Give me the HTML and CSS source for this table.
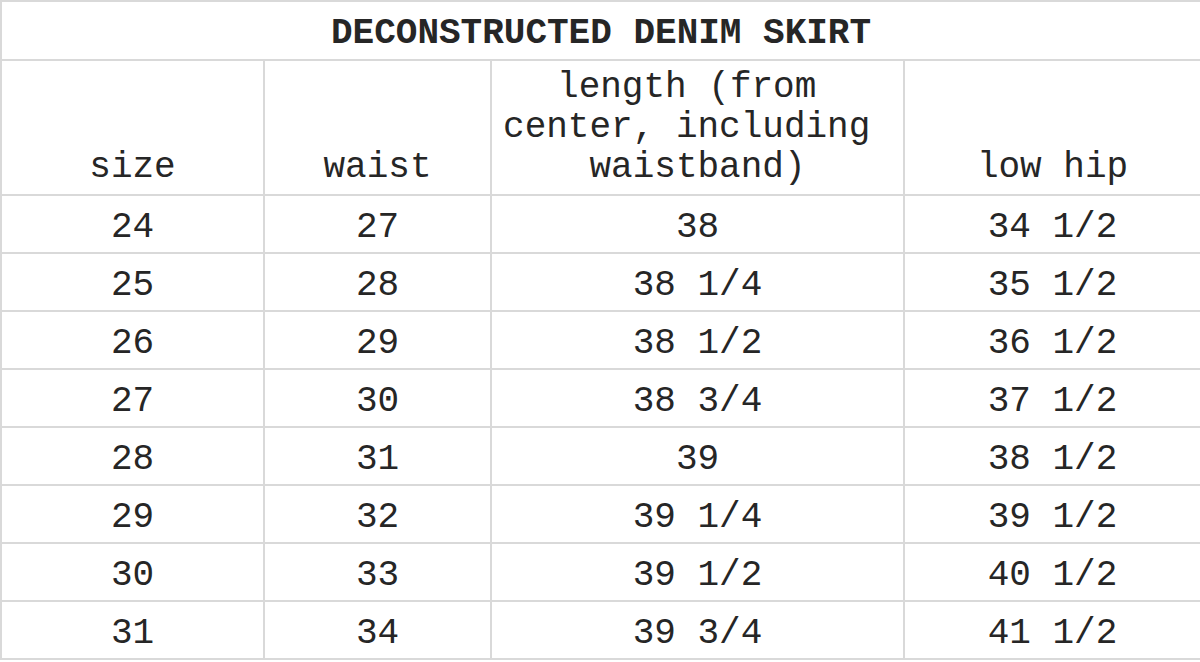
FILE: index.html
```html
<!DOCTYPE html>
<html>
<head>
<meta charset="utf-8">
<link rel="stylesheet" href="styles.css">
</head>
<body>
<table class="size-chart">
  <colgroup>
    <col class="c-size">
    <col class="c-waist">
    <col class="c-length">
    <col class="c-hip">
  </colgroup>
  <thead>
    <tr class="title-row"><th colspan="4">DECONSTRUCTED DENIM SKIRT</th></tr>
    <tr class="head-row">
      <th>size</th>
      <th>waist</th>
      <th>length (from&nbsp;<br>center, including&nbsp;<br>waistband)</th>
      <th>low hip</th>
    </tr>
  </thead>
  <tbody>
    <tr><td>24</td><td>27</td><td>38</td><td>34 1/2</td></tr>
    <tr><td>25</td><td>28</td><td>38 1/4</td><td>35 1/2</td></tr>
    <tr><td>26</td><td>29</td><td>38 1/2</td><td>36 1/2</td></tr>
    <tr><td>27</td><td>30</td><td>38 3/4</td><td>37 1/2</td></tr>
    <tr><td>28</td><td>31</td><td>39</td><td>38 1/2</td></tr>
    <tr><td>29</td><td>32</td><td>39 1/4</td><td>39 1/2</td></tr>
    <tr><td>30</td><td>33</td><td>39 1/2</td><td>40 1/2</td></tr>
    <tr><td>31</td><td>34</td><td>39 3/4</td><td>41 1/2</td></tr>
  </tbody>
</table>
</body>
</html>
```
FILE: styles.css
```css
html, body {
  margin: 0;
  padding: 0;
  background: #ffffff;
}

.size-chart {
  width: 1200px;
  border-collapse: collapse;
  table-layout: fixed;
  font-family: "Liberation Mono", "Courier New", monospace;
  font-size: 36px;
  color: #262626;
}

.c-size { width: 263px; }
.c-waist { width: 227px; }
.c-length { width: 413px; }
.c-hip { width: 297px; }

.size-chart th,
.size-chart td {
  border: 2px solid #d9d9d9;
  text-align: center;
  padding: 0;
  font-weight: normal;
  box-sizing: border-box;
}

.title-row th {
  height: 59px;
  font-weight: bold;
  vertical-align: middle;
  padding-top: 6px;
}

.head-row th {
  height: 135px;
  line-height: 40px;
  vertical-align: bottom;
  padding-bottom: 6px;
}

.size-chart td {
  height: 58px;
  vertical-align: middle;
  line-height: 40px;
  padding-top: 8px;
}
```
